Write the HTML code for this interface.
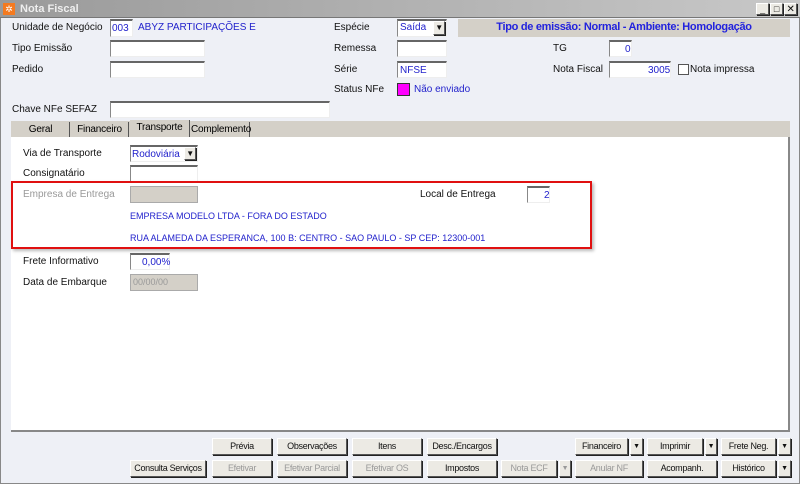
<html><head><style>
body{margin:0;width:800px;height:484px;overflow:hidden;background:#eef0f6;font-family:"Liberation Sans",sans-serif;font-size:10px;position:relative}
div,span{position:absolute;box-sizing:border-box}
.l{color:#111;white-space:nowrap}
.b{color:#2222cc;white-space:nowrap}
.in{background:#fff;border:1px solid #888;border-right-color:#eee;border-bottom-color:#eee;border-top:2px solid #666}
.btn{background:#eceae4;border:1px solid #fff;border-right-color:#555;border-bottom-color:#555;box-shadow:1px 1px 0 #222;text-align:center;font-size:9px;letter-spacing:-0.3px;white-space:nowrap;overflow:hidden;line-height:15px;color:#111;height:17px}
.dis{color:#999}
.ar{font-size:7px}
.tab{text-align:center;line-height:15px;white-space:nowrap;letter-spacing:-0.2px}
</style></head><body>
<div style="left:0;top:0;width:800px;height:18px;background:linear-gradient(90deg,#9a9a9a,#c8c8c8);border-bottom:1px solid #777"></div>
<div style="left:3px;top:3px;width:12px;height:12px;background:#f47a20;color:#fff;font-size:9px;line-height:12px;text-align:center">✲</div>
<span style="left:20px;top:3px;color:#eee;font-weight:bold;font-size:11px">Nota Fiscal</span>
<div class="btn" style="left:756px;top:3px;width:13px;height:12px;line-height:10px;font-size:9px">_</div>
<div class="btn" style="left:770px;top:3px;width:13px;height:12px;line-height:10px;font-size:9px">□</div>
<div class="btn" style="left:784px;top:3px;width:13px;height:12px;line-height:11px;font-size:10px">✕</div>

<span class="l" style="left:12px;top:22px">Unidade de Negócio</span>
<div class="in" style="left:110px;top:19px;width:23px;height:18px"></div><span class="b" style="left:112px;top:23px">003</span>
<span class="b" style="left:138px;top:22px">ABYZ PARTICIPAÇÕES E</span>
<span class="l" style="left:12px;top:43px">Tipo Emissão</span><div class="in" style="left:110px;top:40px;width:95px;height:17px"></div>
<span class="l" style="left:12px;top:64px">Pedido</span><div class="in" style="left:110px;top:61px;width:95px;height:17px"></div>
<span class="l" style="left:12px;top:104px">Chave NFe SEFAZ</span><div class="in" style="left:110px;top:101px;width:220px;height:17px"></div>
<span class="l" style="left:334px;top:22px">Espécie</span>
<div class="in" style="left:397px;top:19px;width:50px;height:18px"></div><span class="b" style="left:400px;top:22px">Saída</span>
<div class="btn" style="left:433px;top:21px;width:12px;height:14px;line-height:12px;font-size:8px">▼</div>
<span class="l" style="left:334px;top:43px">Remessa</span><div class="in" style="left:397px;top:40px;width:50px;height:17px"></div>
<span class="l" style="left:334px;top:64px">Série</span><div class="in" style="left:397px;top:61px;width:50px;height:17px"></div><span class="b" style="left:400px;top:65px">NFSE</span>
<span class="l" style="left:334px;top:84px">Status NFe</span>
<div style="left:397px;top:83px;width:13px;height:13px;background:#f0f;border:1px solid #333"></div>
<span class="b" style="left:414px;top:84px">Não enviado</span>
<div style="left:458px;top:19px;width:332px;height:18px;background:#d4d0c8"></div>
<span style="left:458px;top:21px;width:332px;text-align:center;color:#2222dd;font-weight:bold;font-size:11px;letter-spacing:-0.3px">Tipo de emissão: Normal - Ambiente: Homologação</span>
<span class="l" style="left:553px;top:43px">TG</span><div class="in" style="left:609px;top:40px;width:23px;height:17px"></div><span class="b" style="left:625px;top:44px">0</span>
<span class="l" style="left:553px;top:64px">Nota Fiscal</span><div class="in" style="left:609px;top:61px;width:62px;height:17px"></div><span class="b" style="left:648px;top:65px">3005</span>
<div style="left:678px;top:64px;width:11px;height:11px;border:1px solid #555;background:#fff"></div>
<span class="l" style="left:690px;top:64px">Nota impressa</span>

<div style="left:11px;top:121px;width:779px;height:16px;background:#d4d0c8"></div>
<div class="tab" style="left:12px;top:122px;width:58px;height:15px;border-right:1px solid #555">Geral</div>
<div class="tab" style="left:71px;top:122px;width:58px;height:15px;border-right:1px solid #555">Financeiro</div>
<div class="tab" style="left:130px;top:120px;width:60px;height:17px;background:#d4d0c8;border-right:1px solid #555">Transporte</div>
<div class="tab" style="left:191px;top:122px;width:59px;height:15px;border-right:1px solid #555">Complemento</div>
<div style="left:11px;top:137px;width:779px;height:295px;background:#fff;border-right:2px solid #888;border-bottom:2px solid #888"></div>

<span class="l" style="left:23px;top:148px">Via de Transporte</span>
<div class="in" style="left:130px;top:145px;width:68px;height:17px"></div><span class="b" style="left:132px;top:149px">Rodoviária</span>
<div class="btn" style="left:184px;top:147px;width:12px;height:13px;line-height:11px;font-size:8px">▼</div>
<span class="l" style="left:23px;top:168px">Consignatário</span><div class="in" style="left:130px;top:165px;width:68px;height:17px"></div>
<div style="left:11px;top:181px;width:581px;height:68px;border:2px solid #e01010;box-shadow:2px 2px 3px #bbb"></div>
<span class="l" style="left:23px;top:189px;color:#999">Empresa de Entrega</span>
<div style="left:130px;top:186px;width:68px;height:17px;background:#d4d0c8;border:1px solid #aaa"></div>
<span class="l" style="left:420px;top:189px">Local de Entrega</span>
<div class="in" style="left:527px;top:186px;width:23px;height:17px"></div><span class="b" style="left:544px;top:190px">2</span>
<span class="b" style="left:130px;top:211px;font-size:9px">EMPRESA MODELO LTDA - FORA DO ESTADO</span>
<span class="b" style="left:130px;top:233px;font-size:9px">RUA ALAMEDA DA ESPERANCA, 100 B: CENTRO - SAO PAULO - SP CEP: 12300-001</span>
<span class="l" style="left:23px;top:256px">Frete Informativo</span>
<div class="in" style="left:130px;top:253px;width:40px;height:17px"></div><span class="b" style="left:142px;top:257px">0,00%</span>
<span class="l" style="left:23px;top:277px">Data de Embarque</span>
<div style="left:130px;top:274px;width:68px;height:17px;background:#d4d0c8;border:1px solid #aaa;color:#999;padding:2px 2px;font-size:9px">00/00/00</div>

<div class="btn" style="left:212px;top:438px;width:60px">Prévia</div>
<div class="btn" style="left:277px;top:438px;width:70px">Observações</div>
<div class="btn" style="left:352px;top:438px;width:70px">Itens</div>
<div class="btn" style="left:427px;top:438px;width:70px">Desc./Encargos</div>
<div class="btn" style="left:575px;top:438px;width:53px">Financeiro</div><div class="btn ar" style="left:630px;top:438px;width:13px">▼</div>
<div class="btn" style="left:647px;top:438px;width:56px">Imprimir</div><div class="btn ar" style="left:705px;top:438px;width:12px">▼</div>
<div class="btn" style="left:721px;top:438px;width:55px">Frete Neg.</div><div class="btn ar" style="left:778px;top:438px;width:13px">▼</div>
<div class="btn" style="left:130px;top:460px;width:76px">Consulta Serviços</div>
<div class="btn dis" style="left:212px;top:460px;width:60px">Efetivar</div>
<div class="btn dis" style="left:277px;top:460px;width:70px">Efetivar Parcial</div>
<div class="btn dis" style="left:352px;top:460px;width:70px">Efetivar OS</div>
<div class="btn" style="left:427px;top:460px;width:70px">Impostos</div>
<div class="btn dis" style="left:501px;top:460px;width:56px">Nota ECF</div><div class="btn ar dis" style="left:559px;top:460px;width:12px">▼</div>
<div class="btn dis" style="left:575px;top:460px;width:68px">Anular NF</div>
<div class="btn" style="left:647px;top:460px;width:70px">Acompanh.</div>
<div class="btn" style="left:721px;top:460px;width:55px">Histórico</div><div class="btn ar" style="left:778px;top:460px;width:13px">▼</div>
<div style="left:0;top:18px;width:800px;height:466px;border:1px solid #888;border-top:none"></div>
</body></html>
